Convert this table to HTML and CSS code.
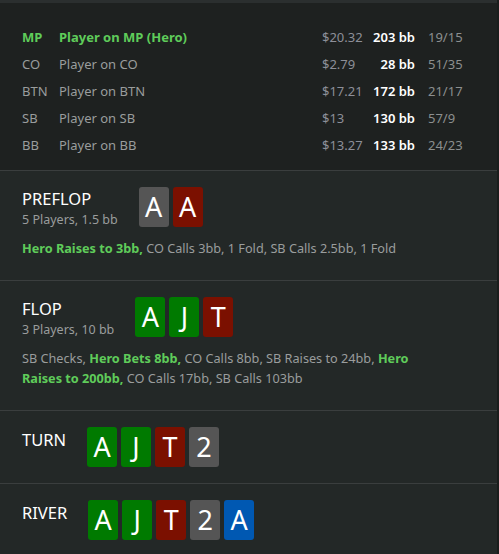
FILE: index.html
```html
<!DOCTYPE html>
<html>
<head>
<meta charset="utf-8">
<link rel="stylesheet" href="styles.css">
</head>
<body>
<div class="app">
  <div class="topbar"></div>
  <div class="players">
    <div class="row hero"><span class="pos">MP</span><span class="name">Player on MP (Hero)</span><span class="money">$20.32</span><span class="stack">203 bb</span><span class="ratio">19/15</span></div>
    <div class="row"><span class="pos">CO</span><span class="name">Player on CO</span><span class="money">$2.79</span><span class="stack">28 bb</span><span class="ratio">51/35</span></div>
    <div class="row"><span class="pos">BTN</span><span class="name">Player on BTN</span><span class="money">$17.21</span><span class="stack">172 bb</span><span class="ratio">21/17</span></div>
    <div class="row"><span class="pos">SB</span><span class="name">Player on SB</span><span class="money">$13</span><span class="stack">130 bb</span><span class="ratio">57/9</span></div>
    <div class="row"><span class="pos">BB</span><span class="name">Player on BB</span><span class="money">$13.27</span><span class="stack">133 bb</span><span class="ratio">24/23</span></div>
  </div>

  <section class="street">
    <div class="head">
      <div class="info">
        <div class="title">PREFLOP</div>
        <div class="sub">5 Players, 1.5 bb</div>
      </div>
      <div class="cards"><span class="card gray">A</span><span class="card red">A</span></div>
    </div>
    <p class="actions"><b>Hero Raises to 3bb,</b> CO Calls 3bb, 1 Fold, SB Calls 2.5bb, 1 Fold</p>
  </section>

  <section class="street">
    <div class="head">
      <div class="info">
        <div class="title">FLOP</div>
        <div class="sub">3 Players, 10 bb</div>
      </div>
      <div class="cards"><span class="card green">A</span><span class="card green">J</span><span class="card red">T</span></div>
    </div>
    <p class="actions">SB Checks, <b>Hero Bets 8bb,</b> CO Calls 8bb, SB Raises to 24bb, <b>Hero Raises to 200bb,</b> CO Calls 17bb, SB Calls 103bb</p>
  </section>

  <section class="street short">
    <div class="head">
      <div class="info">
        <div class="title">TURN</div>
      </div>
      <div class="cards"><span class="card green">A</span><span class="card green">J</span><span class="card red">T</span><span class="card gray">2</span></div>
    </div>
  </section>

  <section class="street short last">
    <div class="head">
      <div class="info">
        <div class="title">RIVER</div>
      </div>
      <div class="cards"><span class="card green">A</span><span class="card green">J</span><span class="card red">T</span><span class="card gray">2</span><span class="card blue">A</span></div>
    </div>
  </section>
</div>
</body>
</html>
```

FILE: styles.css
```css
html, body {
  margin: 0;
  padding: 0;
  background: #232827;
}
body {
  font-family: "Noto Sans", "Open Sans", sans-serif;
  color: #9a9d9d;
}
.app {
  width: 497px;
  height: 554px;
  overflow: hidden;
  background: #232827;
  border-right: 2px solid #1a1d1c;
}
.topbar {
  height: 3px;
  background: #2b2f2f;
}
.players {
  background: #1e2120;
  padding: 21px 0 11px 22px;
}
.row {
  display: grid;
  grid-template-columns: 37px 263px 50px 43px auto;
  height: 27px;
  line-height: 27px;
  font-size: 13px;
  color: #9a9d9d;
}
.row .stack {
  text-align: right;
  color: #ffffff;
  font-weight: 600;
}
.row .ratio {
  padding-left: 13px;
  color: #8c8f8f;
}
.row .money {
  color: #8d8f98;
}
.row.hero .pos,
.row.hero .name {
  color: #5fcc5a;
  font-weight: 700;
}
.street {
  border-top: 1px solid #3a3e3e;
  padding: 16px 52px 16px 22px;
}
.head {
  display: flex;
  align-items: flex-start;
  gap: 21px;
}
.title {
  font-size: 16.5px;
  line-height: 22px;
  color: #ffffff;
  margin-top: 1px;
}
.short .title {
  margin-top: 2px;
}
.sub {
  font-size: 12.5px;
  line-height: 20px;
  color: #9a9d9d;
}
.cards {
  display: flex;
  gap: 4px;
}
.card {
  width: 30px;
  height: 40px;
  border-radius: 3px;
  color: #ffffff;
  font-size: 27px;
  line-height: 40px;
  text-align: center;
}
.card.gray { background: #555555; }
.card.red { background: #7b1000; }
.card.green { background: #007a00; }
.card.blue { background: #0058b2; }
.actions {
  margin: 8px 0 6px;
  font-size: 12.7px;
  line-height: 20px;
  color: #9a9d9d;
}
.actions b {
  color: #5fcc5a;
  font-weight: 700;
}
```
